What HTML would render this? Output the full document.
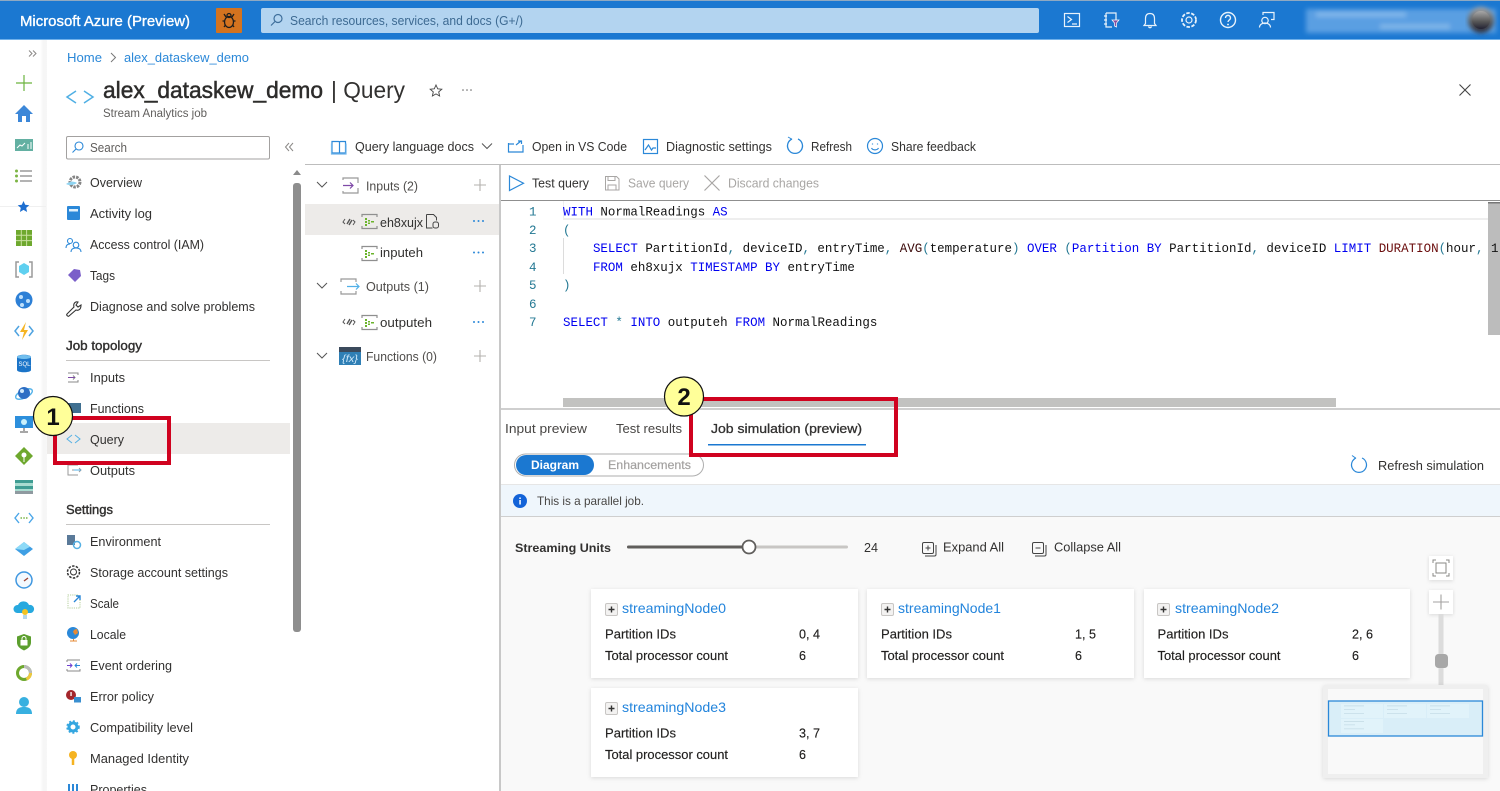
<!DOCTYPE html>
<html lang="en"><head><meta charset="utf-8"><title>alex_dataskew_demo | Query</title>
<style>
html,body{margin:0;padding:0;background:#fff;width:1500px;height:791px;overflow:hidden}
svg{display:block;filter:blur(.35px)}
text{font-family:"Liberation Sans",sans-serif;font-size:13px;fill:#323130;white-space:pre}
.b{font-weight:700}
.sb{stroke:#323130;stroke-width:.4}
.w{fill:#fff}
.l{fill:#2b88d8}
.g{fill:#a8a6a4}
.c text,text.c{font-family:"Liberation Mono",monospace;font-size:12.47px;fill:#111}
.k{fill:#0000f0}.f{fill:#6a0c0c}.v{fill:#3a0808}.p{fill:#237893}
.n{font-family:"Liberation Mono",monospace;font-size:12.47px;fill:#237893}
.d{font-size:12.5px;fill:#201f1e;stroke:#201f1e;stroke-width:.15}
.t{font-size:14px;fill:#2284dc}
.s{fill:none;stroke-width:1.1}
</style></head><body>
<svg width="1500" height="791" viewBox="0 0 1500 791" xmlns="http://www.w3.org/2000/svg">
<defs>
<filter id="bl" x="-10%" y="-30%" width="120%" height="160%"><feGaussianBlur stdDeviation="2.5"/></filter>
<filter id="sh" x="-10%" y="-15%" width="120%" height="130%"><feDropShadow dx="0" dy="1" stdDeviation="2" flood-color="#000" flood-opacity=".13"/></filter>
<linearGradient id="nv" x1="0" x2="1" y1="0" y2="0"><stop offset="0" stop-color="#fff"/><stop offset=".5" stop-color="#f5f5f5"/><stop offset="1" stop-color="#f7f7f7"/></linearGradient>
<linearGradient id="av" x1="0" x2="0" y1="0" y2="1"><stop offset="0" stop-color="#a8a8a8"/><stop offset=".6" stop-color="#555"/><stop offset="1" stop-color="#223"/></linearGradient>
<symbol id="stream" viewBox="0 0 17 17"><path d="M1 4V1.500h15V4M1 13v2.500h15V13" fill="none" stroke="#8f8f8f" stroke-width="1.200"/><path d="M4 5h2v2H4zM4 8h2v2H4zM4 11h2v2H4zM7 7h2v1.500H7zM7 9.500h2V11H7zM10 8h3v1.500h-3z" fill="#6bb42c"/></symbol>
<symbol id="link" viewBox="0 0 14 10"><path d="M3 2 1 5l2 2M11 8l2-3-2-2" fill="none" stroke="#555" stroke-width="1"/><path d="m5 7 3-5M7 8l3-5" fill="none" stroke="#555" stroke-width="1.400"/></symbol>
<symbol id="pb" viewBox="0 0 13 13"><rect x=".5" y=".5" width="12" height="12" rx="1.500" fill="#f3f2f1" stroke="#c8c6c4"/><path d="M6.500 3.500v6M3.500 6.500h6" stroke="#333" stroke-width="1.400"/></symbol>
</defs>

<!-- top bar -->
<rect width="1500" height="39.500" fill="#1b78d1"/>
<rect width="1500" height="1" fill="#8fa9c2"/>
<rect y="39" width="1500" height="1" fill="#6fb0ea"/>
<text class="w" x="20" y="26" style="font-size:15px;stroke:#fff;stroke-width:.35" textLength="170" lengthAdjust="spacingAndGlyphs">Microsoft Azure (Preview)</text>
<rect x="216" y="8" width="26" height="25" rx="1" fill="#d4731f"/>
<g fill="none" stroke="#1d1d1d" stroke-width="1.300"><ellipse cx="229" cy="22" rx="4.500" ry="5.500"/><circle cx="229" cy="15.500" r="2"/><path d="M224 14l2 3M234 14l-2 3M222.500 21h2M233.500 21h2M224 27l1.500-2M234 27l-1.500-2"/></g>
<rect x="261" y="8" width="778" height="25" rx="2" fill="#b3d4f0"/>
<g fill="none" stroke="#3f6f9c" stroke-width="1.200"><circle cx="278" cy="18.500" r="4"/><path d="m275 21.500-4 4"/></g>
<text x="290" y="25" style="fill:#3d6a92" textLength="233" lengthAdjust="spacingAndGlyphs">Search resources, services, and docs (G+/)</text>
<g fill="none" stroke="#e8f2fb" stroke-width="1.200">
<rect x="1064.500" y="13.500" width="15" height="13"/><path d="m1067.500 16.500 4 3-4 3M1072 24h5"/>
<path d="M1106 13h10v9M1106 13v14h6M1104 16h3M1104 20h3M1104 24h3"/>
<path d="M1150 13.500c-3 0-4.500 2-4.500 5v5l-1.500 2h12l-1.500-2v-5c0-3-1.500-5-4.500-5zM1148.500 26.500c.5 1.500 2.500 1.500 3 0"/>
<circle cx="1189" cy="20" r="3"/><circle cx="1189" cy="20" r="7" stroke-dasharray="3.500 1.500" stroke-width="1.800"/>
<circle cx="1228" cy="20" r="7.500" stroke-width="1.400"/>
<path d="M1225.500 18c0-3.500 5-3.500 5 0 0 2-2.500 2-2.500 4" stroke-width="1.400"/>
<circle cx="1265" cy="20.500" r="3.200"/><path d="M1259.500 27.500c0-6 11-6 11 0M1263 15v-2.500h11v7h-3"/>
</g>
<path d="M1112 20h7l-2.500 3v4l-2-1v-3z" fill="#8a4fa0" stroke="#fff" stroke-width=".7"/>
<circle cx="1228" cy="24.500" r=".9" fill="#fff"/>
<g filter="url(#bl)"><rect x="1306" y="9" width="190" height="24" fill="#5a9fe2"/><rect x="1316" y="12" width="90" height="5" fill="#80b6ea"/><rect x="1380" y="24" width="70" height="5" fill="#7fb5e8"/></g>
<circle cx="1481" cy="20" r="13" fill="url(#av)" filter="url(#bl)" />
<circle cx="1481" cy="20" r="9" fill="url(#av)"/>

<!-- left global nav -->
<rect x="40" y="40" width="7" height="751" fill="url(#nv)"/>
<path d="M29 53.500l3-3-3-3M33 53.500l3-3-3-3" fill="none" stroke="#8a8886" transform="translate(0 3)"/>
<rect x="0" y="206" width="46" height="1" fill="#f0f0f0"/>
<path d="M16 83h16M24 75v16" stroke="#6cb33f" stroke-width="1.200"/>
<path d="M15 114l9-9 9 9h-3v8h-12v-8z" fill="#3c87d8"/><rect x="22" y="116" width="4" height="6" fill="#fff"/>
<rect x="15" y="139" width="18" height="12" fill="#63b0a2"/><path d="M17 148l3-3 2 1 3-3M28 149v-5M31 149v-7" stroke="#fff" fill="none"/>
<g fill="#7db544"><circle cx="16.500" cy="171" r="1.500"/><circle cx="16.500" cy="176" r="1.500"/><circle cx="16.500" cy="181" r="1.500"/></g>
<path d="M20 171h12M20 176h12M20 181h12" stroke="#9a9a9a" stroke-width="1.500"/>
<path d="M23.500 201l1.700 3.800 4.100.4-3.100 2.700.9 4.100-3.600-2.100-3.600 2.100.9-4.100-3.100-2.700 4.100-.4z" fill="#1e6fd0"/>
<path d="M16 230h16v16H16z" fill="#6ea82e"/><path d="M21.300 230v16M26.600 230v16M16 235.300h16M16 240.600h16" stroke="#c8e09f"/>
<path d="M19 262h-3v15h3M29 262h3v15h-3" fill="none" stroke="#9a9a9a" stroke-width="1.500"/><path d="M24 263l5 3v6l-5 3-5-3v-6z" fill="#5fd0f0"/>
<circle cx="24" cy="300" r="8.500" fill="#2d80d6"/><circle cx="21" cy="297" r="2" fill="#bfe0fb"/><circle cx="28" cy="301" r="2" fill="#bfe0fb"/><circle cx="22" cy="305" r="2" fill="#bfe0fb"/>
<path d="M19 326l-4 5 4 5M29 326l4 5-4 5" fill="none" stroke="#4fa3e0" stroke-width="1.500"/><path d="M26 322l-6 10h4l-2 8 6-10h-4z" fill="#f5b422"/>
<path d="M17 357c0-3 14-3 14 0v13c0 3-14 3-14 0z" fill="#1b74c8"/><ellipse cx="24" cy="357" rx="7" ry="2" fill="#72bfee"/><text x="18.500" y="366" style="font-size:6px;fill:#fff">SQL</text>
<ellipse cx="24" cy="394" rx="9" ry="4" fill="none" stroke="#55b3ea" stroke-width="1.400" transform="rotate(-25 24 394)"/><circle cx="24" cy="393" r="6" fill="#2d6fc4"/><circle cx="22" cy="391" r="2" fill="#cfe9fb"/>
<rect x="15" y="416" width="18" height="12" fill="#2d8fdc"/><circle cx="24" cy="422" r="3" fill="#c9f0fb"/><path d="M24 428v3M20 432h8" stroke="#8a8a8a" stroke-width="1.500"/>
<path d="M24 447l9 9-9 9-9-9z" fill="#6ea82e"/><circle cx="24" cy="455" r="2.500" fill="#fff"/><path d="M24 457v5" stroke="#fff"/>
<rect x="15" y="480" width="18" height="14" fill="#a8dcd0"/><rect x="15" y="480" width="18" height="3" fill="#3f9d93"/><rect x="15" y="486" width="18" height="3" fill="#3f9d93"/><rect x="15" y="491" width="18" height="3" fill="#8f9aa0"/>
<path d="M19 513l-4 5 4 5M29 513l4 5-4 5" fill="none" stroke="#4aa6e8" stroke-width="1.400"/><path d="M20.500 518h1.500M23.300 518h1.500M26 518h1.500" stroke="#7ab648" stroke-width="1.500"/>
<path d="M24 542l9 7-9 7-9-7z" fill="#3f9fe4"/><path d="M24 542l-9 7 9 1 6-3.300z" fill="#8edaf7"/>
<circle cx="24" cy="580" r="8" fill="#f3f9fe" stroke="#3f97e0" stroke-width="1.500"/><path d="M24 581l4-3" stroke="#9c4030" stroke-width="1.400"/>
<path d="M17 613a4 4 0 0 1 1-8 6 6 0 0 1 11 0 4 4 0 0 1 2 8z" fill="#27a9df"/><circle cx="25" cy="612" r="3" fill="#f3c322"/><path d="M24 615v4M26 615v4" stroke="#6bb0d8"/>
<path d="M24 634l7 2.500v6c0 4-3 6-7 8-4-2-7-4-7-8v-6z" fill="#5c9f2e"/><rect x="20.500" y="640" width="7" height="5.500" fill="#fff"/><path d="M22 640v-1.500a2 2 0 0 1 4 0v1.500" fill="none" stroke="#fff"/>
<circle cx="24" cy="673" r="6.500" fill="none" stroke="#6ea82e" stroke-width="3"/><path d="M24 665a8 8 0 0 1 8 8h-3a5 5 0 0 0-5-5z" fill="#bbb"/><path d="M32 673a8 8 0 0 1-5 7.500l-1.200-2.800a5 5 0 0 0 3.200-4.700z" fill="#f0c83c"/>
<circle cx="24" cy="702" r="5" fill="#38b0e0"/><path d="M16 714c0-6 4-7 8-7s8 1 8 7z" fill="#38b0e0"/>

<!-- breadcrumb + title -->
<text class="l" x="67" y="62" textLength="35" lengthAdjust="spacingAndGlyphs">Home</text>
<path d="m111 53 4.500 4.500-4.500 4.500" fill="none" stroke="#777"/>
<text class="l" x="124" y="62" textLength="125" lengthAdjust="spacingAndGlyphs">alex_dataskew_demo</text>
<path d="M76 91l-9 6 9 6M84 91l9 6-9 6" fill="none" stroke="#50afe4" stroke-width="1.500"/>
<text x="103" y="98" style="font-size:23px;fill:#2d2c2b;stroke:#2d2c2b;stroke-width:.5" textLength="220" lengthAdjust="spacingAndGlyphs">alex_dataskew_demo</text>
<text x="331" y="98" style="font-size:23px;fill:#323130" textLength="74" lengthAdjust="spacingAndGlyphs">| Query</text>
<text x="103" y="117" style="font-size:11.500px;fill:#605e5c" textLength="104" lengthAdjust="spacingAndGlyphs">Stream Analytics job</text>
<path d="M436 85l1.700 3.800 4.100.4-3.100 2.700.9 4.100-3.600-2.100-3.600 2.100.9-4.100-3.100-2.700 4.100-.4z" fill="none" stroke="#444" stroke-width=".9"/>
<g fill="#666"><circle cx="463" cy="90" r=".8"/><circle cx="467" cy="90" r=".8"/><circle cx="471" cy="90" r=".8"/></g>
<path d="M1459.500 84.500l11 11M1470.500 84.500l-11 11" stroke="#444" stroke-width="1.100"/>

<!-- resource menu -->
<rect x="66.500" y="136.500" width="203" height="22.500" rx="1.500" fill="#fff" stroke="#a3a1a0"/>
<g fill="none" stroke="#2b88d8" stroke-width="1.100"><circle cx="79" cy="146" r="4"/><path d="m76 149-3.500 3.500"/></g>
<text x="90" y="152" style="fill:#605e5c" textLength="37" lengthAdjust="spacingAndGlyphs">Search</text>
<path d="M289 143l-3.500 4 3.500 4M293 143l-3.500 4 3.500 4" fill="none" stroke="#8a8886"/>

<rect x="47" y="423" width="243" height="31" fill="#edebe9"/>
<text x="90" y="187" textLength="52" lengthAdjust="spacingAndGlyphs">Overview</text>
<text x="90" y="218" textLength="62" lengthAdjust="spacingAndGlyphs">Activity log</text>
<text x="90" y="249" textLength="114" lengthAdjust="spacingAndGlyphs">Access control (IAM)</text>
<text x="90" y="280" textLength="25" lengthAdjust="spacingAndGlyphs">Tags</text>
<text x="90" y="311" textLength="165" lengthAdjust="spacingAndGlyphs">Diagnose and solve problems</text>
<text class="sb" x="66" y="350" textLength="76" lengthAdjust="spacingAndGlyphs">Job topology</text>
<rect x="66" y="360" width="204" height="1" fill="#c8c6c4"/>
<text x="90" y="382" textLength="35" lengthAdjust="spacingAndGlyphs">Inputs</text>
<text x="90" y="413" textLength="54" lengthAdjust="spacingAndGlyphs">Functions</text>
<text x="90" y="444" textLength="34" lengthAdjust="spacingAndGlyphs">Query</text>
<text x="90" y="475" textLength="45" lengthAdjust="spacingAndGlyphs">Outputs</text>
<text class="sb" x="66" y="514" textLength="47" lengthAdjust="spacingAndGlyphs">Settings</text>
<rect x="66" y="524" width="204" height="1" fill="#c8c6c4"/>
<text x="90" y="546" textLength="71" lengthAdjust="spacingAndGlyphs">Environment</text>
<text x="90" y="577" textLength="138" lengthAdjust="spacingAndGlyphs">Storage account settings</text>
<text x="90" y="608" textLength="29" lengthAdjust="spacingAndGlyphs">Scale</text>
<text x="90" y="639" textLength="36" lengthAdjust="spacingAndGlyphs">Locale</text>
<text x="90" y="670" textLength="82" lengthAdjust="spacingAndGlyphs">Event ordering</text>
<text x="90" y="701" textLength="64" lengthAdjust="spacingAndGlyphs">Error policy</text>
<text x="90" y="732" textLength="103" lengthAdjust="spacingAndGlyphs">Compatibility level</text>
<text x="90" y="763" textLength="99" lengthAdjust="spacingAndGlyphs">Managed Identity</text>
<text x="90" y="794" textLength="57" lengthAdjust="spacingAndGlyphs">Properties</text>

<!-- menu icons -->
<circle cx="75" cy="182" r="5" fill="none" stroke="#858585" stroke-width="3" stroke-dasharray="2.500 1"/><path d="M66 184c4-3 8-3 11-1-3 2-7 3-11 1z" fill="#8fd3f0"/>
<rect x="67" y="206" width="13" height="14" rx="1" fill="#2b88d8"/><rect x="69" y="209" width="9" height="2.500" fill="#dff0fb"/>
<g fill="none" stroke="#2b88d8" stroke-width="1.100"><circle cx="70" cy="241" r="2.500"/><circle cx="76" cy="245" r="2.800"/><path d="M66 248c0-3 2-4 4-4M71 252c0-3 2-4 5-4s5 1 5 4"/></g>
<path d="M68 275l6-6 6 1 1 6-6 6z" fill="#7b5fc9"/>
<path d="M67 314l7-7c-1-3 1-6 4-5l-2 3 2 2 3-2c0 4-2 6-5 5l-7 6c-1 1-3-1-2-2z" fill="none" stroke="#333" stroke-width="1.100"/>
<path d="M68 373h10v2M68 382h10v-2M68 377.500h7m-2-2 2 2-2 2" fill="none" stroke="#8a8a8a"/><path d="M68 377.500h7" stroke="#7f4aa8"/>
<rect x="68" y="403" width="13" height="10" fill="#3f6f90"/>
<path d="M72 435l-5 4 5 4M75 435l5 4-5 4" fill="none" stroke="#55b0e4"/>
<path d="M78 465h-10v10h10M72 470h9m-2-2 2 2-2 2" fill="none" stroke="#9a9a9a"/><path d="M74 470h7" stroke="#50b0e8"/>
<rect x="67" y="535" width="8" height="10" fill="#5a7a99"/><circle cx="77" cy="545" r="3.500" fill="none" stroke="#55b0e4" stroke-width="1.500"/>
<circle cx="73.500" cy="572" r="3" fill="none" stroke="#333"/><circle cx="73.500" cy="572" r="6" fill="none" stroke="#333" stroke-width="1.500" stroke-dasharray="2.500 1.300"/>
<path d="M78 597v-2H68v13h12v-8" fill="none" stroke="#b5cf9c" stroke-dasharray="1.200 1"/><path d="M74 602l6-6m-4 0h4v4" fill="none" stroke="#2b88d8" stroke-width="1.400"/>
<circle cx="73" cy="633" r="6" fill="#2b88d8"/><path d="M73 632a4 4 0 0 1 4-3l1 4-3 2z" fill="#e68a34"/><path d="M70 641h7M73.500 639v2" stroke="#e68a34"/>
<path d="M67 660h13M67 671h13v-2M67 671v-2M67 660v2" fill="none" stroke="#8a8a8a"/><path d="M67 665.500h5m-2-2 2 2-2 2" stroke="#7040d0" fill="none"/><path d="M80 665.500h-5m2-2-2 2 2 2" stroke="#2b88d8" fill="none"/>
<circle cx="71" cy="695" r="5" fill="#a4262c"/><rect x="74" y="697" width="7" height="5.500" fill="#3a8fd0"/><rect x="70.400" y="692" width="1.300" height="4" fill="#fff"/>
<circle cx="73" cy="727" r="4" fill="none" stroke="#33a6e0" stroke-width="3"/><circle cx="73" cy="727" r="6" fill="none" stroke="#33a6e0" stroke-width="1.500" stroke-dasharray="2 2"/>
<circle cx="73" cy="755" r="4" fill="#f5b321"/><path d="M73 758v7" stroke="#f5b321" stroke-width="2.500"/>
<path d="M69 784v7M73 784v7M77 784v7" stroke="#2b88d8" stroke-width="2"/>

<!-- menu scrollbar -->
<path d="M297 170l4 5h-8z" fill="#8a8a8a"/>
<rect x="293" y="183" width="8" height="449" rx="3" fill="#8e8e8e"/>

<!-- toolbar -->
<g fill="none" stroke="#2b88d8" stroke-width="1.200">
<path d="M332 141.500h6.500c.5 0 1 .5 1 1v10.500h-7.500zM339.500 142.500c0-.5.5-1 1-1h5v11.500h-6"/><path d="M331.500 143.500v10.500h14.500v-10.500" stroke="#70b5ea"/>
<path d="M508.500 143v9h14.500v-7M514 144h-5.500M516 145l5-4m-3 0h3.500v3"/>
<rect x="643.500" y="139.500" width="14" height="14"/><path d="M645 150l3.500-5 3 5 1.500-2h3"/>
<path d="M792 139a7.500 7.500 0 1 0 6 0" stroke-width="1.300"/><path d="M788 137l3.500 2-3 3" stroke-width="1"/>
<circle cx="875" cy="146" r="7.500"/><path d="M871.500 148c1.500 2.500 5.500 2.500 7 0"/><path d="M872.500 143.500v1M877.500 143.500v1"/>
</g>
<text x="355" y="151" textLength="119" lengthAdjust="spacingAndGlyphs">Query language docs</text>
<path d="M482 143.500l5 5 5-5" fill="none" stroke="#555"/>
<text x="532" y="151" textLength="95" lengthAdjust="spacingAndGlyphs">Open in VS Code</text>
<text x="666" y="151" textLength="106" lengthAdjust="spacingAndGlyphs">Diagnostic settings</text>
<text x="811" y="151" textLength="41" lengthAdjust="spacingAndGlyphs">Refresh</text>
<text x="891" y="151" textLength="85" lengthAdjust="spacingAndGlyphs">Share feedback</text>
<rect x="305" y="164" width="1195" height="1" fill="#bdbdbd"/>
<rect x="499" y="165" width="2" height="626" fill="#c8c8c8"/>

<!-- tree -->
<rect x="305" y="204" width="194" height="31" fill="#edebe9"/>
<g fill="none" stroke="#555"><path d="m317 182 5 5 5-5M317 283 322 288l5-5M317 353l5 5 5-5"/></g>
<path d="M343 180v-2h15v5M343 191v2h15v-5" fill="none" stroke="#999" stroke-width="1.200"/><path d="M343 185.500h10m-3-3 3 3-3 3" fill="none" stroke="#7f4aa8" stroke-width="1.200"/>
<text x="366" y="190.500" style="fill:#4f4d4b" textLength="52" lengthAdjust="spacingAndGlyphs">Inputs (2)</text>
<path d="M474 185h12M480 179v12M474 286h12M480 280v12M474 356h12M480 350v12" stroke="#b3b0ad" stroke-width="1.100"/>
<use href="#link" x="342" y="217" width="14" height="10"/>
<use href="#stream" x="361" y="213" width="17" height="17"/>
<text x="380" y="227" textLength="43" lengthAdjust="spacingAndGlyphs">eh8xujx</text>
<path d="M426.500 214.500h7l3 3v3M426.500 214.500v13.500h6" fill="none" stroke="#444"/><rect x="433" y="222" width="5.500" height="6" rx="2" fill="none" stroke="#444"/>
<g fill="#2b88d8"><circle cx="474" cy="221" r="1"/><circle cx="478.500" cy="221" r="1"/><circle cx="483" cy="221" r="1"/><circle cx="474" cy="252.500" r="1"/><circle cx="478.500" cy="252.500" r="1"/><circle cx="483" cy="252.500" r="1"/><circle cx="474" cy="322" r="1"/><circle cx="478.500" cy="322" r="1"/><circle cx="483" cy="322" r="1"/></g>
<use href="#stream" x="361" y="245" width="17" height="17"/>
<text x="380" y="257" textLength="43" lengthAdjust="spacingAndGlyphs">inputeh</text>
<path d="M341 282v-3h15v3M341 291v3h15v-3" fill="none" stroke="#999" stroke-width="1.200"/><path d="M347 286.500h12m-3-3 3 3-3 3" fill="none" stroke="#50b0e8" stroke-width="1.200"/>
<text x="366" y="291" style="fill:#4f4d4b" textLength="63" lengthAdjust="spacingAndGlyphs">Outputs (1)</text>
<use href="#link" x="342" y="317" width="14" height="10"/>
<use href="#stream" x="361" y="314" width="17" height="17"/>
<text x="380" y="327" textLength="52" lengthAdjust="spacingAndGlyphs">outputeh</text>
<rect x="339" y="347" width="22" height="18" fill="#2f7fb5"/><rect x="339" y="347" width="22" height="5" fill="#3b4a5c"/>
<text x="342" y="362" style="font-size:10px;fill:#cfe9fb;font-style:italic" textLength="16" lengthAdjust="spacingAndGlyphs">{fx}</text>
<text x="366" y="361" style="fill:#4f4d4b" textLength="71" lengthAdjust="spacingAndGlyphs">Functions (0)</text>

<!-- editor toolbar -->
<path d="M509.500 176v14.500l14-7.250z" fill="none" stroke="#2b88d8" stroke-width="1.200"/>
<text x="532" y="187.500" textLength="57" lengthAdjust="spacingAndGlyphs">Test query</text>
<g fill="none" stroke="#a8a6a4"><path d="M605.500 176.500h11l2.500 2.500v11h-13.500z"/><path d="M608 176.500v4h7v-4M608 190v-5h8v5"/></g>
<text class="g" x="628" y="187.500" textLength="61" lengthAdjust="spacingAndGlyphs">Save query</text>
<path d="M704.500 175.500l15 15M719.500 175.500l-15 15" stroke="#a8a6a4" stroke-width="1.200"/>
<text class="g" x="728" y="187.500" textLength="91" lengthAdjust="spacingAndGlyphs">Discard changes</text>

<!-- code -->
<rect x="563" y="218" width="925" height="2" fill="#eeeeee"/>
<rect x="563" y="201" width="1" height="18" fill="#eeeeee"/>
<rect x="501" y="200" width="999" height="1" fill="#8f8f8f"/>
<rect x="1488" y="202" width="12" height="133" fill="#bcbcbc"/><rect x="1488" y="202" width="12" height="1.500" fill="#777"/>
<rect x="563" y="238" width="1" height="36" fill="#dcdcdc"/>
<g class="n"><text class="n" x="529" y="215.500">1</text><text class="n" x="529" y="234">2</text><text class="n" x="529" y="252">3</text><text class="n" x="529" y="271">4</text><text class="n" x="529" y="289">5</text><text class="n" x="529" y="308">6</text><text class="n" x="529" y="326">7</text></g>
<g class="c">
<text y="215.500" x="563"><tspan class="k">WITH</tspan> NormalReadings <tspan class="k">AS</tspan></text>
<text y="234" x="563"><tspan class="p">(</tspan></text>
<text y="252" x="563">    <tspan class="k">SELECT</tspan> PartitionId<tspan class="p">,</tspan> deviceID<tspan class="p">,</tspan> entryTime<tspan class="p">,</tspan> <tspan class="v">AVG</tspan><tspan class="p">(</tspan>temperature<tspan class="p">)</tspan> <tspan class="k">OVER</tspan> <tspan class="p">(</tspan><tspan class="k">Partition BY</tspan> PartitionId<tspan class="p">,</tspan> deviceID <tspan class="k">LIMIT</tspan> <tspan class="f">DURATION</tspan><tspan class="p">(</tspan>hour<tspan class="p">,</tspan> 1</text>
<text y="271" x="563">    <tspan class="k">FROM</tspan> eh8xujx <tspan class="k">TIMESTAMP BY</tspan> entryTime</text>
<text y="289" x="563"><tspan class="p">)</tspan></text>
<text y="326" x="563"><tspan class="k">SELECT</tspan> <tspan class="p">*</tspan> <tspan class="k">INTO</tspan> outputeh <tspan class="k">FROM</tspan> NormalReadings</text>
</g>
<rect x="563" y="398" width="773" height="9" fill="#c2c2c0"/>
<rect x="501" y="408" width="999" height="2" fill="#cfcfcf"/>

<!-- tabs -->
<text x="505" y="433" style="fill:#484644" textLength="82" lengthAdjust="spacingAndGlyphs">Input preview</text>
<text x="616" y="433" style="fill:#484644" textLength="66" lengthAdjust="spacingAndGlyphs">Test results</text>
<text x="711" y="433" style="stroke:#323130;stroke-width:.3" textLength="151" lengthAdjust="spacingAndGlyphs">Job simulation (preview)</text>
<rect x="708" y="444" width="158" height="1.500" fill="#1b78d1"/>
<rect x="514.500" y="454" width="189" height="22" rx="11" fill="#fff" stroke="#aeaeae"/>
<rect x="516" y="455" width="78" height="20" rx="10" fill="#1b78d1"/>
<text class="w b" x="531" y="469" style="font-size:12px" textLength="48" lengthAdjust="spacingAndGlyphs">Diagram</text>
<text x="608" y="469" style="font-size:12px;fill:#a3a1a0;stroke:#a3a1a0;stroke-width:.2" textLength="83" lengthAdjust="spacingAndGlyphs">Enhancements</text>
<path d="M1356 458a7.500 7.500 0 1 0 6 0" fill="none" stroke="#2b88d8" stroke-width="1.200"/><path d="M1352 455.500l3.500 2.500-3 3" fill="none" stroke="#2b88d8"/>
<text x="1378" y="470" textLength="106" lengthAdjust="spacingAndGlyphs">Refresh simulation</text>

<!-- info bar -->
<rect x="501" y="484" width="999" height="1" fill="#e6e6e6"/>
<rect x="501" y="485" width="999" height="31" fill="#eff6fc"/>
<rect x="501" y="516" width="999" height="1" fill="#cfcfcf"/>
<circle cx="520" cy="501" r="7" fill="#1363d8"/><rect x="519.300" y="500" width="1.500" height="4.500" fill="#fff"/><rect x="519.300" y="497.500" width="1.500" height="1.500" fill="#fff"/>
<text x="537" y="505" style="font-size:12px;fill:#484644" textLength="107" lengthAdjust="spacingAndGlyphs">This is a parallel job.</text>

<!-- diagram -->
<rect x="501" y="517" width="999" height="274" fill="#f9f9f9"/>
<text class="b" x="515" y="552" style="font-size:12px" textLength="96" lengthAdjust="spacingAndGlyphs">Streaming Units</text>
<rect x="627" y="545.500" width="221" height="3" rx="1.500" fill="#c8c6c4"/>
<rect x="627" y="545.500" width="122" height="3" rx="1.500" fill="#605e5c"/>
<circle cx="749" cy="547" r="6.500" fill="#fff" stroke="#605e5c" stroke-width="1.800"/>
<text x="864" y="552" textLength="14" lengthAdjust="spacingAndGlyphs">24</text>
<g fill="none" stroke="#444"><rect x="922.500" y="542.500" width="11" height="11" rx="1.500"/><path d="M925 556h9.500c1 0 1.500-.5 1.500-1.500V545M928 545.500v5M925.500 548h5"/>
<rect x="1032.500" y="542.500" width="11" height="11" rx="1.500"/><path d="M1035 556h9.500c1 0 1.500-.5 1.500-1.500V545M1035.500 548h5"/></g>
<text x="943" y="551.500" textLength="61" lengthAdjust="spacingAndGlyphs">Expand All</text>
<text x="1054" y="551.500" textLength="67" lengthAdjust="spacingAndGlyphs">Collapse All</text>

<!-- cards -->
<g filter="url(#sh)" fill="#fff"><rect x="591" y="589" width="267" height="89"/><rect x="867" y="589" width="267" height="89"/><rect x="1144" y="589" width="266" height="89"/><rect x="591" y="688" width="267" height="89"/></g>
<use href="#pb" x="605" y="603" width="13" height="13"/>
<text class="t" x="622" y="613" textLength="104" lengthAdjust="spacingAndGlyphs">streamingNode0</text>
<text class="d" x="605" y="638.500" textLength="71" lengthAdjust="spacingAndGlyphs">Partition IDs</text><text class="d" x="799" y="638.500" textLength="21" lengthAdjust="spacingAndGlyphs">0, 4</text>
<text class="d" x="605" y="660" textLength="123" lengthAdjust="spacingAndGlyphs">Total processor count</text><text class="d" x="799" y="660">6</text>
<use href="#pb" x="881" y="603" width="13" height="13"/>
<text class="t" x="898" y="613" textLength="103" lengthAdjust="spacingAndGlyphs">streamingNode1</text>
<text class="d" x="881" y="638.500" textLength="71" lengthAdjust="spacingAndGlyphs">Partition IDs</text><text class="d" x="1075" y="638.500" textLength="21" lengthAdjust="spacingAndGlyphs">1, 5</text>
<text class="d" x="881" y="660" textLength="123" lengthAdjust="spacingAndGlyphs">Total processor count</text><text class="d" x="1075" y="660">6</text>
<use href="#pb" x="1157" y="603" width="13" height="13"/>
<text class="t" x="1175" y="613" textLength="104" lengthAdjust="spacingAndGlyphs">streamingNode2</text>
<text class="d" x="1157.500" y="638.500" textLength="71" lengthAdjust="spacingAndGlyphs">Partition IDs</text><text class="d" x="1352" y="638.500" textLength="21" lengthAdjust="spacingAndGlyphs">2, 6</text>
<text class="d" x="1157.500" y="660" textLength="123" lengthAdjust="spacingAndGlyphs">Total processor count</text><text class="d" x="1352" y="660">6</text>
<use href="#pb" x="605" y="702" width="13" height="13"/>
<text class="t" x="622" y="712" textLength="104" lengthAdjust="spacingAndGlyphs">streamingNode3</text>
<text class="d" x="605" y="737.500" textLength="71" lengthAdjust="spacingAndGlyphs">Partition IDs</text><text class="d" x="799" y="737.500" textLength="21" lengthAdjust="spacingAndGlyphs">3, 7</text>
<text class="d" x="605" y="759" textLength="123" lengthAdjust="spacingAndGlyphs">Total processor count</text><text class="d" x="799" y="759">6</text>

<!-- zoom controls -->
<g filter="url(#sh)" fill="#fff"><rect x="1429" y="556" width="24" height="24"/><rect x="1429" y="590" width="24" height="24"/></g>
<path d="M1433 563v-3h3M1446 560h3v3M1449 573v3h-3M1436 576h-3v-3" fill="none" stroke="#8a8886"/><rect x="1436" y="563" width="10" height="10" fill="none" stroke="#8a8886"/>
<path d="M1433 602h16M1441 594.500v15" stroke="#a3a1a0" stroke-width="1.100"/>
<rect x="1438.500" y="614" width="5" height="72" fill="#dcdcdc"/>
<rect x="1435" y="654" width="13" height="14" rx="3.500" fill="#a8a8a8"/>

<!-- minimap -->
<rect x="1323" y="685" width="165" height="93" rx="2" fill="#efefef" filter="url(#sh)"/>
<rect x="1328" y="689" width="155" height="85" fill="#f9f9f9"/>
<rect x="1328.500" y="701" width="154" height="35" fill="#d9eef8" stroke="#2b88d8" stroke-width="1.300"/>
<g fill="#e1f3fa"><rect x="1341" y="704" width="42" height="14"/><rect x="1384" y="704" width="42" height="14"/><rect x="1427" y="704" width="42" height="14"/><rect x="1341" y="719" width="42" height="14"/></g>
<g fill="#c4dbe5"><rect x="1344" y="705.500" width="20" height=".8"/><rect x="1344" y="709" width="11" height=".7"/><rect x="1344" y="713" width="20" height=".7"/><rect x="1387" y="705.500" width="20" height=".8"/><rect x="1387" y="709" width="11" height=".7"/><rect x="1387" y="713" width="20" height=".7"/><rect x="1430" y="705.500" width="20" height=".8"/><rect x="1430" y="709" width="11" height=".7"/><rect x="1430" y="713" width="20" height=".7"/><rect x="1344" y="721" width="20" height=".8"/><rect x="1344" y="724.500" width="11" height=".7"/><rect x="1344" y="728.500" width="20" height=".7"/></g>

<!-- callouts -->
<rect x="55" y="418" width="114" height="45" fill="none" stroke="#d0021f" stroke-width="4"/>
<rect x="691" y="399" width="205" height="56" fill="none" stroke="#d0021f" stroke-width="4"/>
<circle cx="53" cy="416" r="19.500" fill="#ffff99" stroke="#111" stroke-width="1.200"/>
<text class="b" x="53" y="425" text-anchor="middle" style="font-size:24px;fill:#111">1</text>
<circle cx="684" cy="396.500" r="19.500" fill="#ffff99" stroke="#111" stroke-width="1.200"/>
<text class="b" x="684" y="405" text-anchor="middle" style="font-size:24px;fill:#111">2</text>
</svg>
</body></html>
